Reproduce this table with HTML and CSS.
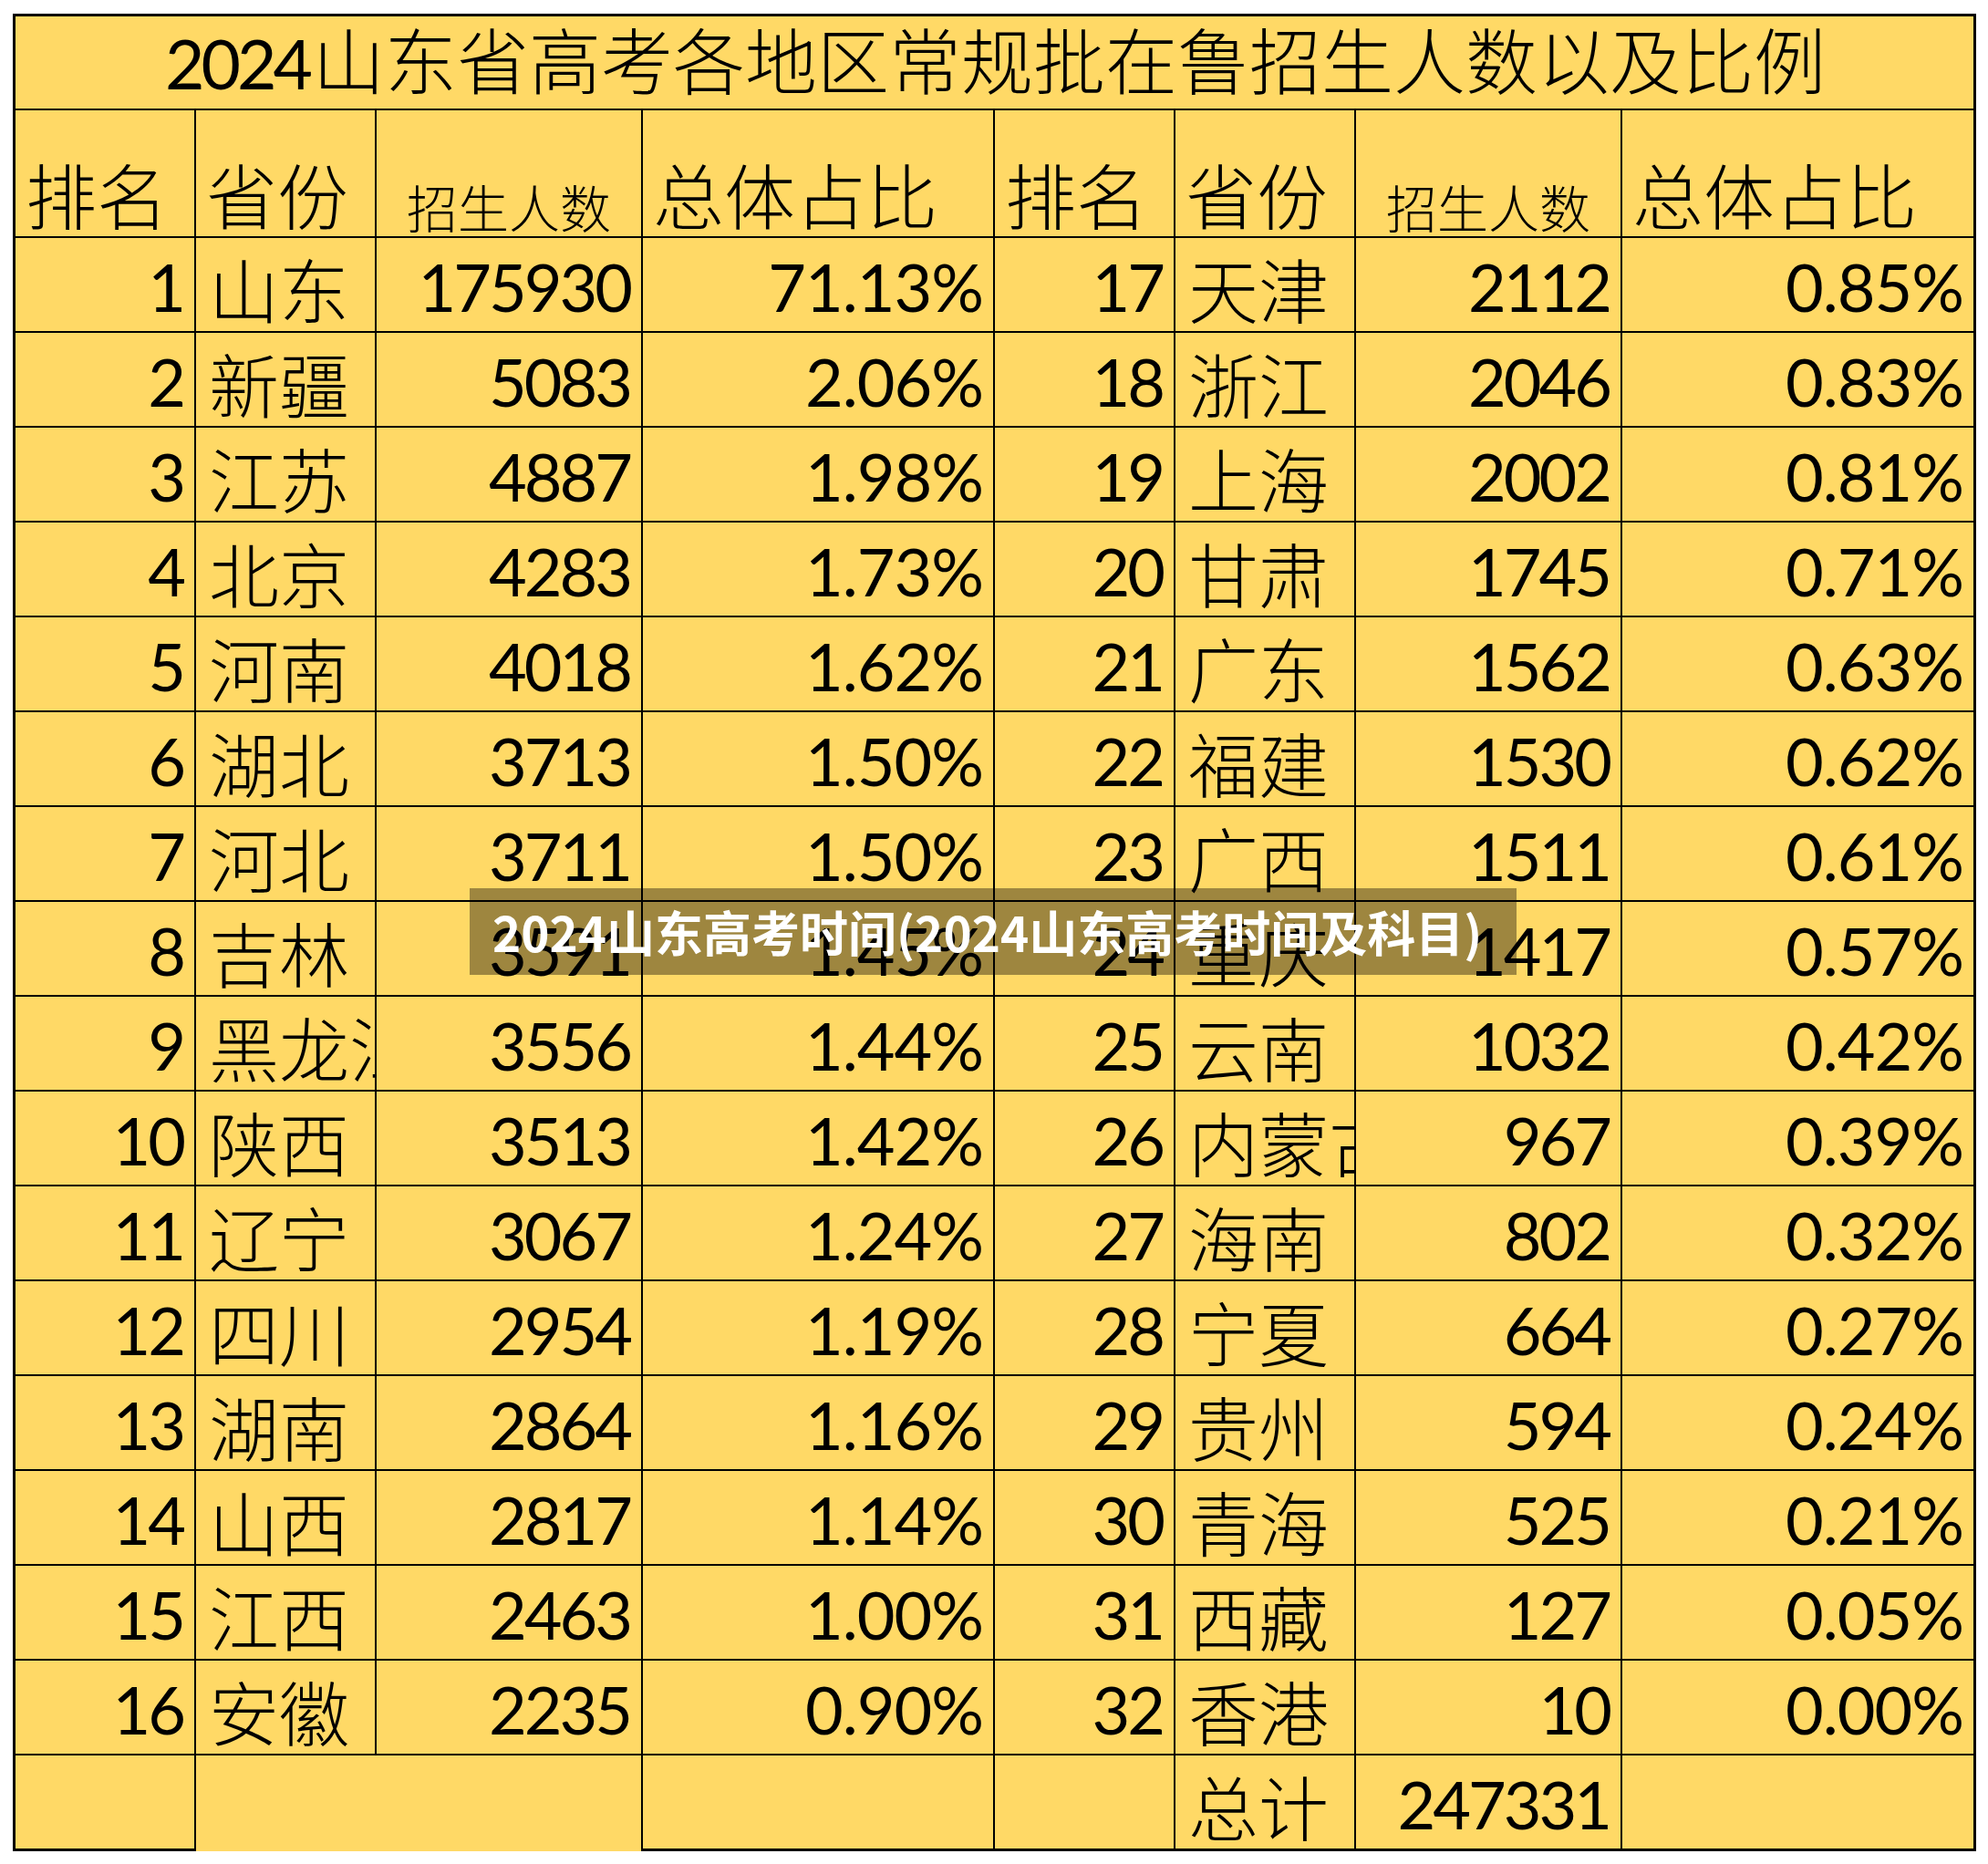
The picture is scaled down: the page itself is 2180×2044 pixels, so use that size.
FILE: index.html
```html
<!DOCTYPE html>
<html lang="zh-CN">
<head>
<meta charset="utf-8">
<title>2024山东省高考各地区常规批在鲁招生人数以及比例</title>
<link rel="stylesheet" href="styles.css">
</head>
<body>
<div class="sheet">
  <div class="c title"><span class="tline"><span class="tnum">2024</span>山东省高考各地区常规批在鲁招生人数以及比例</span></div>

  <div class="c h">排名</div><div class="c h">省份</div><div class="c hs">招生人数</div><div class="c h">总体占比</div>
  <div class="c h">排名</div><div class="c h">省份</div><div class="c hs">招生人数</div><div class="c h">总体占比</div>

  <div class="c num">1</div><div class="c prov">山东</div><div class="c num">175930</div><div class="c num pct">71.13%</div>
  <div class="c num">17</div><div class="c prov">天津</div><div class="c num">2112</div><div class="c num pct">0.85%</div>

  <div class="c num">2</div><div class="c prov">新疆</div><div class="c num">5083</div><div class="c num pct">2.06%</div>
  <div class="c num">18</div><div class="c prov">浙江</div><div class="c num">2046</div><div class="c num pct">0.83%</div>

  <div class="c num">3</div><div class="c prov">江苏</div><div class="c num">4887</div><div class="c num pct">1.98%</div>
  <div class="c num">19</div><div class="c prov">上海</div><div class="c num">2002</div><div class="c num pct">0.81%</div>

  <div class="c num">4</div><div class="c prov">北京</div><div class="c num">4283</div><div class="c num pct">1.73%</div>
  <div class="c num">20</div><div class="c prov">甘肃</div><div class="c num">1745</div><div class="c num pct">0.71%</div>

  <div class="c num">5</div><div class="c prov">河南</div><div class="c num">4018</div><div class="c num pct">1.62%</div>
  <div class="c num">21</div><div class="c prov">广东</div><div class="c num">1562</div><div class="c num pct">0.63%</div>

  <div class="c num">6</div><div class="c prov">湖北</div><div class="c num">3713</div><div class="c num pct">1.50%</div>
  <div class="c num">22</div><div class="c prov">福建</div><div class="c num">1530</div><div class="c num pct">0.62%</div>

  <div class="c num">7</div><div class="c prov">河北</div><div class="c num">3711</div><div class="c num pct">1.50%</div>
  <div class="c num">23</div><div class="c prov">广西</div><div class="c num">1511</div><div class="c num pct">0.61%</div>

  <div class="c num">8</div><div class="c prov">吉林</div><div class="c num">3591</div><div class="c num pct">1.45%</div>
  <div class="c num">24</div><div class="c prov">重庆</div><div class="c num">1417</div><div class="c num pct">0.57%</div>

  <div class="c num">9</div><div class="c prov clip">黑龙江</div><div class="c num">3556</div><div class="c num pct">1.44%</div>
  <div class="c num">25</div><div class="c prov">云南</div><div class="c num">1032</div><div class="c num pct">0.42%</div>

  <div class="c num">10</div><div class="c prov">陕西</div><div class="c num">3513</div><div class="c num pct">1.42%</div>
  <div class="c num">26</div><div class="c prov clip">内蒙古</div><div class="c num">967</div><div class="c num pct">0.39%</div>

  <div class="c num">11</div><div class="c prov">辽宁</div><div class="c num">3067</div><div class="c num pct">1.24%</div>
  <div class="c num">27</div><div class="c prov">海南</div><div class="c num">802</div><div class="c num pct">0.32%</div>

  <div class="c num">12</div><div class="c prov">四川</div><div class="c num">2954</div><div class="c num pct">1.19%</div>
  <div class="c num">28</div><div class="c prov">宁夏</div><div class="c num">664</div><div class="c num pct">0.27%</div>

  <div class="c num">13</div><div class="c prov">湖南</div><div class="c num">2864</div><div class="c num pct">1.16%</div>
  <div class="c num">29</div><div class="c prov">贵州</div><div class="c num">594</div><div class="c num pct">0.24%</div>

  <div class="c num">14</div><div class="c prov">山西</div><div class="c num">2817</div><div class="c num pct">1.14%</div>
  <div class="c num">30</div><div class="c prov">青海</div><div class="c num">525</div><div class="c num pct">0.21%</div>

  <div class="c num">15</div><div class="c prov">江西</div><div class="c num">2463</div><div class="c num pct">1.00%</div>
  <div class="c num">31</div><div class="c prov">西藏</div><div class="c num">127</div><div class="c num pct">0.05%</div>

  <div class="c num">16</div><div class="c prov">安徽</div><div class="c num">2235</div><div class="c num pct">0.90%</div>
  <div class="c num">32</div><div class="c prov">香港</div><div class="c num">10</div><div class="c num pct">0.00%</div>

  <div class="c"></div><div class="c merged"></div><div class="c"></div>
  <div class="c"></div><div class="c prov total">总计</div><div class="c num">247331</div><div class="c"></div>

  <div class="banner">2024山东高考时间(2024山东高考时间及科目)</div>
</div>
</body>
</html>
```

FILE: styles.css
```css
html, body {
  margin: 0;
  padding: 0;
  background: #ffffff;
}

.sheet {
  position: relative;
  display: grid;
  grid-template-columns: 196px 196px 290px 384px 196px 196px 290px 385px;
  grid-template-rows: 101px 138px repeat(17, 102px);
  gap: 2px;
  padding: 3px;
  width: max-content;
  margin: 15px 0 0 14px;
  background: #000000;
}

.c {
  background: #ffd966;
  color: #000000;
  display: flex;
  align-items: flex-end;
  white-space: nowrap;
  line-height: 1;
}

.clip {
  overflow: hidden;
}

.title {
  grid-column: 1 / -1;
  justify-content: center;
  padding-bottom: 12px;
  font-family: "Noto Sans CJK SC", sans-serif;
  font-weight: 300;
  font-size: 79px;
}

.tline {
  padding-left: 2px;
}

.tnum {
  font-family: Lato, "Liberation Sans", sans-serif;
  font-weight: 400;
  font-size: 75px;
  letter-spacing: -4px;
  margin-right: 4px;
}

.h {
  font-family: "Noto Sans CJK SC", sans-serif;
  font-weight: 300;
  font-size: 78px;
  padding: 0 0 8px 11px;
}

.hs {
  font-family: "Noto Sans CJK SC", sans-serif;
  font-weight: 300;
  font-size: 56px;
  justify-content: center;
  padding-bottom: 5px;
}

.num {
  justify-content: flex-end;
  font-family: Lato, "Liberation Sans", sans-serif;
  font-size: 72px;
  letter-spacing: -3px;
  padding: 0 12px 13px 0;
}

.pct {
  letter-spacing: -1px;
  padding-right: 11px;
}

.prov {
  font-family: "Noto Sans CJK SC", sans-serif;
  font-weight: 300;
  font-size: 77px;
  padding: 0 0 9px 14px;
}

.merged {
  grid-column: span 2;
  margin-bottom: -3px;
}

.banner {
  position: absolute;
  left: 501px;
  top: 959px;
  width: 1148px;
  height: 95px;
  box-sizing: border-box;
  padding-left: 25px;
  display: flex;
  align-items: center;
  background: rgba(0, 0, 0, 0.38);
  color: #ffffff;
  font-family: "Noto Sans CJK SC", sans-serif;
  font-weight: 700;
  font-size: 53px;
  line-height: 1;
  white-space: nowrap;
}
```
